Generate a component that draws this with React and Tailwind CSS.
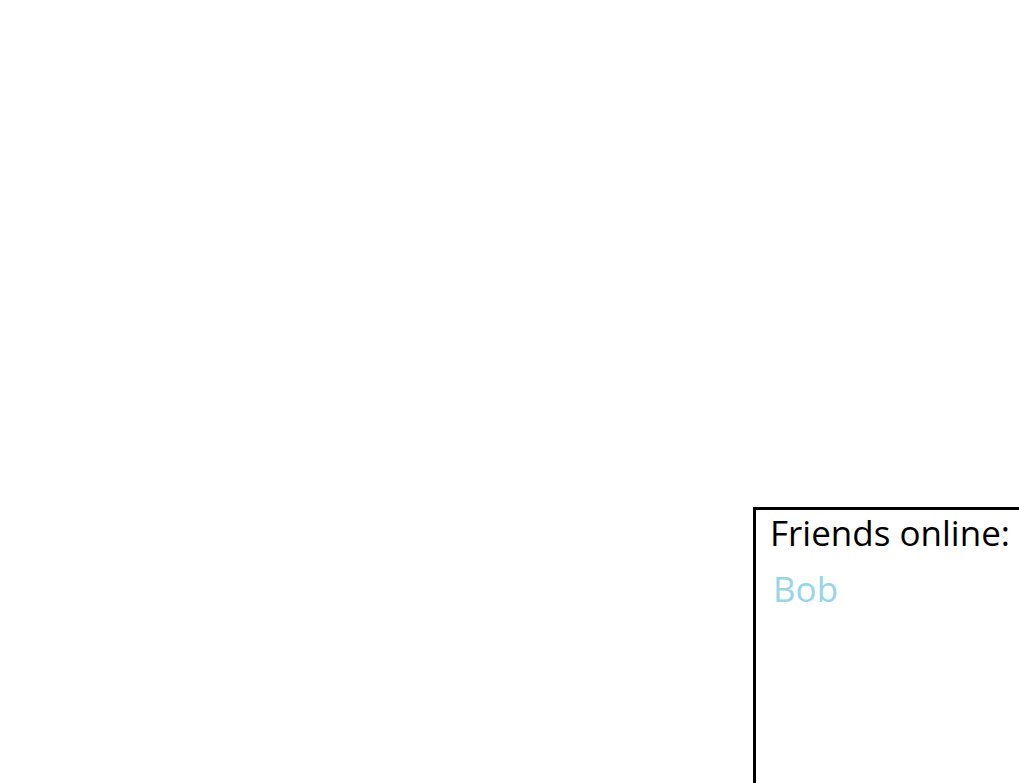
const friends = ["Bob"];

const App = () => {
  return (
    <div className="h-[783px] w-[1019px] overflow-hidden bg-white" style={{ fontFamily: '"Open Sans", sans-serif' }}>
      <div className="ml-[753px] mt-[507px] h-[320px] w-[320px] border-[3px] border-black px-[14px] pt-[1px]">
        <h2 className="whitespace-nowrap text-[35px] leading-[44px] text-black">Friends online:</h2>
        <ul className="mt-[12px] pl-[3px]">
          {friends.map((name) => (
            <li key={name} className="text-[35px] leading-[44px] text-[#97d5ea]">
              {name}
            </li>
          ))}
        </ul>
      </div>
    </div>
  );
};

export default App;
